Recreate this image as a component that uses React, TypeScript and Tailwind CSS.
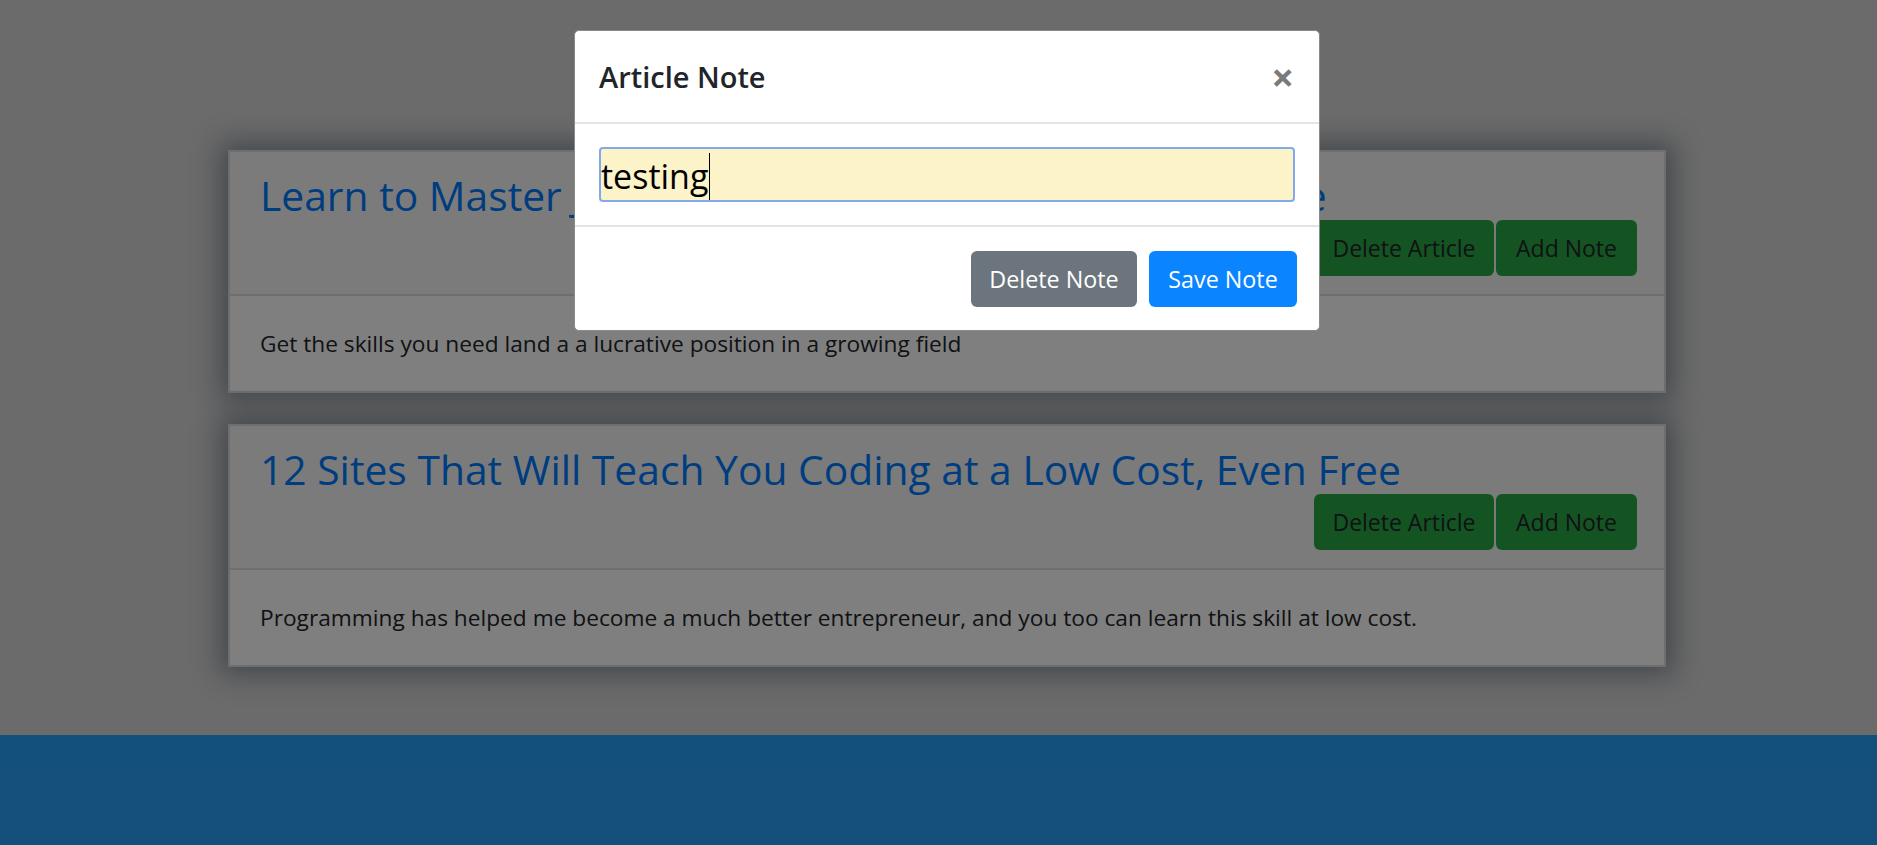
import React from 'react';

type Article = {
  title: string;
  summary: string;
};

const articles: Article[] = [
  {
    title: 'Learn to Master JavaScript, Vue and Node in This Bundle',
    summary: 'Get the skills you need land a a lucrative position in a growing field',
  },
  {
    title: '12 Sites That Will Teach You Coding at a Low Cost, Even Free',
    summary: 'Programming has helped me become a much better entrepreneur, and you too can learn this skill at low cost.',
  },
];

function ArticleCard({ article }: { article: Article }) {
  return (
    <div className="border-2 border-[#dcdcdc] bg-white shadow-[0_0_26px_8px_rgba(20,40,60,0.4)]">
      <div className="border-b-2 border-[#dcdcdc] bg-[#f7f7f7] px-[30px] pt-[18px] pb-[18px]">
        <h3 className="text-[40.8px] leading-[50px] font-normal text-[#007bff]">{article.title}</h3>
        <div className="-mr-[3px] flex justify-end gap-[2px]">
          <button className="h-[56px] w-[180px] rounded-[6px] bg-[#28a745] text-[23px] text-[#212529]">Delete Article</button>
          <button className="h-[56px] w-[141px] rounded-[6px] bg-[#28a745] text-[23px] text-[#212529]">Add Note</button>
        </div>
      </div>
      <div className="px-[30px] pt-[30px] pb-[29px]">
        <p className="text-[22.7px] leading-[36px] text-[#212529]">{article.summary}</p>
      </div>
    </div>
  );
}

function NoteModal() {
  return (
    <div className="absolute top-[30px] left-[574px] w-[746px] rounded-[5px] border border-[#8a8a8a] bg-white">
      <div className="flex items-center justify-between border-b-2 border-[#e2e5e8] px-[24px] py-[23px]">
        <h5 className="text-[29px] leading-[45px] font-semibold text-[#212529]">Article Note</h5>
        <button className="mr-[1px] text-[40px] leading-[45px] font-bold text-[#7a7a7a]">×</button>
      </div>
      <div className="px-[24px] py-[23px]">
        <div className="flex h-[55px] items-center rounded-[4px] border-2 border-[#80aaec] bg-[#fcf3c8] pt-[3px]">
          <span className="text-[34px] leading-[40px] text-black">testing</span>
          <span className="ml-[1px] inline-block h-[47px] w-px bg-black" />
        </div>
      </div>
      <div className="flex justify-end gap-[12px] border-t-2 border-[#e2e5e8] px-[22px] pt-[24px] pb-[23px]">
        <button className="h-[56px] w-[166px] rounded-[6px] bg-[#6c757d] text-[23.3px] text-white">Delete Note</button>
        <button className="h-[56px] w-[148px] rounded-[6px] bg-[#0a84ff] text-[23.3px] text-white">Save Note</button>
      </div>
    </div>
  );
}

export default function App() {
  return (
    <div className="relative h-[845px] overflow-hidden bg-[#d6d6d6] font-['Open_Sans',sans-serif]">
      <main className="pt-[150px] pb-[68px]">
        <div className="ml-[228px] flex w-[1438px] flex-col gap-[31px]">
          {articles.map((a) => (
            <ArticleCard key={a.title} article={a} />
          ))}
        </div>
      </main>
      <footer className="h-[112px] bg-[#29a0f8]" />
      <div className="absolute inset-0 bg-black/50" />
      <NoteModal />
    </div>
  );
}
